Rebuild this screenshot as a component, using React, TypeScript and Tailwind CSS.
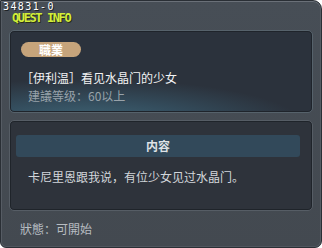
import React from "react";

const cjk = { fontFamily: '"Noto Sans CJK SC", "Noto Sans", sans-serif' };

export default function App() {
  return (
    <div className="w-[322px] h-[248px] bg-white">
      <div className="relative w-full h-full flex flex-col px-[8px] rounded-tr-[9px] rounded-br-[7px] rounded-bl-[6px] border border-[#2a2f35] bg-gradient-to-b from-[#474e56] to-[#434950] shadow-[inset_0_1px_0_#6a7078,inset_1px_0_0_#565c64,inset_-1px_0_0_#565c64,inset_0_-1px_0_#50565e]">
        <div
          className="absolute left-[2px] top-[1px] text-[10px] leading-[9px] tracking-[1.4px] text-white"
          style={{ fontFamily: '"DejaVu Sans Mono", monospace', textShadow: "1px 1px 0 #1e2226" }}
        >
          34831-0
        </div>
        <div className="h-[29px] shrink-0 pt-[12px] pl-[3px]">
          <span
            className="block text-[12px] leading-[10px] font-bold tracking-[-1.4px] text-[#d2ee3a]"
            style={{ fontFamily: '"DejaVu Sans Mono", monospace', textShadow: "1px 1px 0 #2a3016" }}
          >
            QUEST INFO
          </span>
        </div>

        <div className="h-[83px] shrink-0 rounded-[5px] border border-[#56626b] bg-[radial-gradient(ellipse_90%_70%_at_25%_115%,#41697a_0%,#344d5d_40%,#2b323c_80%)] shadow-[inset_0_0_0_1px_#1f242b] pl-[11px] pt-[11px] flex flex-col" style={cjk}>
          <div className="w-[60px] h-[15px] rounded-full bg-[#c6a47b] flex items-center justify-center text-[12px] leading-[12px] font-bold text-white">
            職業
          </div>
          <div className="mt-[12px] text-[12px] leading-[18px] text-[#f2f3f4] whitespace-nowrap">
            ［伊利温］看见水晶门的少女
          </div>
          <div className="pl-[7px] text-[12px] leading-[18px] text-[#98a2aa] whitespace-nowrap">
            建議等级：60以上
          </div>
        </div>

        <div className="mt-[7px] h-[91px] shrink-0 rounded-[5px] border border-[#565d65] bg-[#2e333b] shadow-[inset_0_0_0_1px_#1f242a] pt-[14px] pl-[6px] pr-[12px] flex flex-col" style={cjk}>
          <div className="h-[22px] rounded-[3px] bg-[#32495a] flex items-center justify-center text-[12px] font-bold text-[#dde2e6]">
            内容
          </div>
          <div className="mt-[11px] pl-[12px] text-[12px] leading-[18px] text-[#d2d6da] whitespace-nowrap">
            卡尼里恩跟我说，有位少女见过水晶门。
          </div>
        </div>

        <div className="mt-[9px] pl-[11px] text-[12px] leading-[18px] text-[#b8bdc2] whitespace-nowrap" style={cjk}>
          狀態：可開始
        </div>
      </div>
    </div>
  );
}
